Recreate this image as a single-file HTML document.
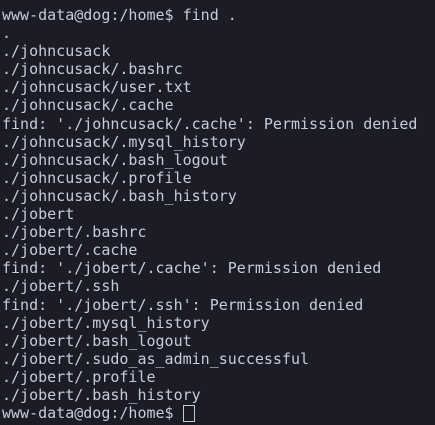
<!DOCTYPE html>
<html><head><style>
html,body{margin:0;padding:0;width:435px;height:425px;overflow:hidden;background:#1c1c27;}
pre{margin:0;padding:6px 0 0 2px;font-family:"DejaVu Sans Mono","Liberation Mono",monospace;font-size:15px;line-height:18.1px;color:#c9cbd9;}
.c{display:inline-block;width:12px;height:17px;border:1px solid #c9cbd9;vertical-align:-4px;box-sizing:border-box;}
</style></head><body><pre>www-data@dog:/home$ find .
.
./johncusack
./johncusack/.bashrc
./johncusack/user.txt
./johncusack/.cache
find: './johncusack/.cache': Permission denied
./johncusack/.mysql_history
./johncusack/.bash_logout
./johncusack/.profile
./johncusack/.bash_history
./jobert
./jobert/.bashrc
./jobert/.cache
find: './jobert/.cache': Permission denied
./jobert/.ssh
find: './jobert/.ssh': Permission denied
./jobert/.mysql_history
./jobert/.bash_logout
./jobert/.sudo_as_admin_successful
./jobert/.profile
./jobert/.bash_history
www-data@dog:/home$ <span class="c"></span></pre></body></html>
